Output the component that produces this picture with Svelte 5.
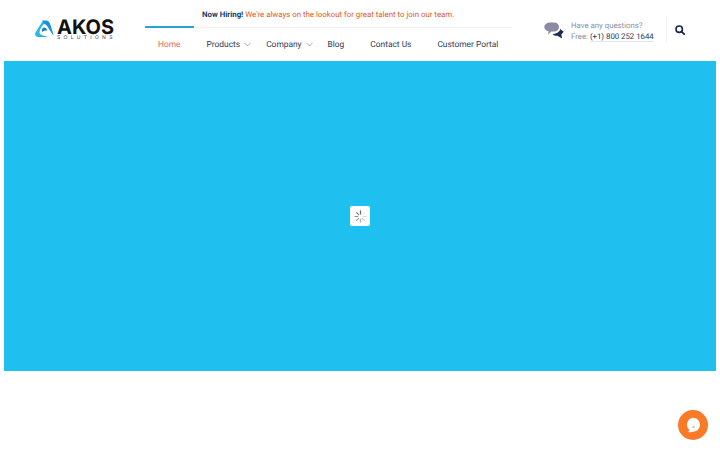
<script>
  const navItems = [
    { label: 'Home', active: true },
    { label: 'Products', chevron: true },
    { label: 'Company', chevron: true },
    { label: 'Blog' },
    { label: 'Contact Us' },
    { label: 'Customer Portal' }
  ];
</script>

<div class="page">
  <header class="header">
    <a class="logo" href="#top">
      <svg class="mark" viewBox="0 0 19 18" width="19" height="18" aria-hidden="true">
        <path d="M7.5 .4 H11 C13.4 .4 14.4 2 15.2 4 L18.8 15.6 C17 13.8 15.6 11.6 14 9 C12.6 6.6 11 3.6 7.5 3.8 Z" fill="#1a93d2"/>
        <path d="M7.4 1.6 L.5 12.6 C-.5 14.6 .8 17 3.2 17 H13 C9.6 15.4 5.6 15.8 4.6 13 C4 10.8 6.4 6.4 9.4 3.6 Z" fill="#2bb6e8"/>
        <path d="M8.8 7.4 C10.8 7.4 12.2 9 12.4 11 C10.8 10.2 9 10.6 7.2 12 C6.4 10.2 7 8 8.8 7.4 Z" fill="#1b7db6"/>
      </svg>
      <span class="wordmark">
        <span class="akos">AKOS</span>
        <span class="solutions">SOLUTIONS</span>
      </span>
    </a>

    <div class="menu">
      <p class="notice"><strong>Now Hiring!</strong> We're always on the lookout for great talent to join our team.</p>
      <nav class="nav">
        {#each navItems as item}
          <a class="nav-item" class:active={item.active} href="#top">
            <span>{item.label}</span>
            {#if item.chevron}
              <svg class="chevron" viewBox="0 0 8 5" width="7" height="5" aria-hidden="true">
                <path d="M.5 .7 L4 4.2 L7.5 .7" fill="none" stroke="#8f95a3" stroke-width=".9"/>
              </svg>
            {/if}
          </a>
        {/each}
      </nav>
    </div>

    <div class="contact">
      <svg class="chat" viewBox="0 0 20 18" width="20" height="18" aria-hidden="true">
        <path d="M6.5 .5 H10 C13 .5 15 2.4 15 5 C15 7.6 13 9.6 10 9.6 H7.5 L4 12.5 L4.6 9.3 C2 8.8 .3 7.2 .3 5 C.3 2.4 3 .5 6.5 .5 Z" fill="#8a8ca6"/>
        <path d="M16.5 6.5 C17 8.5 19 9 19.6 9.2 C19.2 10.6 18.4 11.6 17.4 12.2 L18 16.6 L13.4 13.8 C11.6 14 9.6 13.4 8.4 12 C11.5 12 15.8 10.5 16.5 6.5 Z" fill="#1d2c50"/>
      </svg>
      <div class="contact-text">
        <div>Have any questions?</div>
        <div>Free: <a class="phone" href="#top">(+1) 800 252 1644</a></div>
      </div>
    </div>

    <div class="search">
      <svg viewBox="0 0 10 10" width="10" height="10" aria-hidden="true">
        <circle cx="4.2" cy="4.2" r="3.2" fill="none" stroke="#14264e" stroke-width="1.6"/>
        <path d="M6.6 6.6 L9.2 9.2" stroke="#14264e" stroke-width="1.8" stroke-linecap="round"/>
      </svg>
    </div>
  </header>

  <main class="hero">
    <div class="loader">
      <svg viewBox="0 0 16 16" width="13" height="13" aria-hidden="true">
        {#each [0, 45, 90, 135, 180, 225, 270, 315] as angle, i}
          <line x1="8" y1="1.2" x2="8" y2="4.8" stroke="#666" stroke-width="1.5" stroke-linecap="round" opacity={0.12 + i * 0.12} transform="rotate({angle + 45} 8 8)"/>
        {/each}
      </svg>
    </div>
  </main>

  <button class="chat-button" aria-label="Open chat">
    <svg viewBox="0 0 16 16" width="16" height="16" aria-hidden="true">
      <path d="M8 .8 A7 7 0 1 1 8 14.8 C6.5 15.4 4.5 15.4 3.2 15 C4 14.2 4.2 13.4 4.2 12.8 A7 7 0 0 1 8 .8 Z" fill="#fff"/>
      <path d="M7.4 10 H10" stroke="#777" stroke-width=".7"/>
    </svg>
  </button>
</div>

<style>
  :global(body) {
    margin: 0;
    background: #fff;
  }

  .page {
    position: relative;
    width: 720px;
    height: 450px;
    overflow: hidden;
    font-family: Roboto, "Noto Sans", sans-serif;
    text-rendering: geometricPrecision;
  }

  .header {
    display: flex;
    height: 61px;
    padding-left: 35px;
    box-sizing: border-box;
  }

  .logo {
    display: flex;
    align-items: flex-start;
    gap: 3px;
    width: 110px;
    padding-top: 19px;
    box-sizing: border-box;
    text-decoration: none;
  }

  .mark {
    flex: none;
    margin-top: 1px;
  }

  .wordmark {
    display: flex;
    flex-direction: column;
    font-family: Inter, sans-serif;
  }

  .akos {
    font-size: 20px;
    font-weight: 700;
    line-height: 17px;
    color: #111;
  }

  .solutions {
    font-size: 5px;
    line-height: 5px;
    letter-spacing: 3.3px;
    color: #444;
    white-space: nowrap;
  }

  .menu {
    display: flex;
    flex-direction: column;
    width: 367px;
  }

  .notice {
    margin: 0;
    height: 28px;
    box-sizing: border-box;
    padding: 10px 0 0 57px;
    border-bottom: 1px solid #f1f1f3;
    font-size: 7.85px;
    line-height: 10px;
    color: #d95c2b;
    white-space: nowrap;
  }

  .notice strong {
    color: #14395f;
    font-weight: 700;
  }

  .nav {
    display: flex;
    margin-top: -2px;
  }

  .nav-item {
    display: flex;
    align-items: center;
    height: 33px;
    box-sizing: border-box;
    padding: 2px 13px 0;
    border-top: 2px solid transparent;
    font-size: 8.4px;
    color: #2f3a55;
    text-decoration: none;
    white-space: nowrap;
  }

  .nav-item.active {
    border-top-color: #27a5d2;
    color: #e2685a;
  }

  .chevron {
    flex: none;
    margin: 0 -11px 0 4px;
  }

  .contact {
    display: flex;
    align-items: center;
    width: 122px;
    margin-left: 32px;
    gap: 7px;
    height: 61px;
  }

  .chat {
    flex: none;
  }

  .contact-text {
    font-size: 7.8px;
    line-height: 11px;
    color: #8b8fa3;
    white-space: nowrap;
  }

  .phone {
    color: #2a3350;
    text-decoration: none;
    border-bottom: 1px solid #e4e4ea;
  }

  .search {
    display: flex;
    align-items: center;
    justify-content: center;
    width: 28px;
    height: 26px;
    margin-top: 17px;
    padding-right: 2px;
    border-left: 1px solid #f3f3f5;
    box-sizing: border-box;
  }

  .hero {
    display: flex;
    align-items: center;
    justify-content: center;
    height: 310px;
    margin: 0 4px;
    background: #1fc0f0;
  }

  .loader {
    display: flex;
    align-items: center;
    justify-content: center;
    width: 20px;
    height: 20px;
    background: #fff;
    border-radius: 2px;
  }

  .chat-button {
    position: absolute;
    left: 678px;
    top: 410px;
    display: flex;
    align-items: center;
    justify-content: center;
    width: 30px;
    height: 30px;
    padding: 0;
    border: none;
    border-radius: 50%;
    background: #fb7a28;
  }
</style>
